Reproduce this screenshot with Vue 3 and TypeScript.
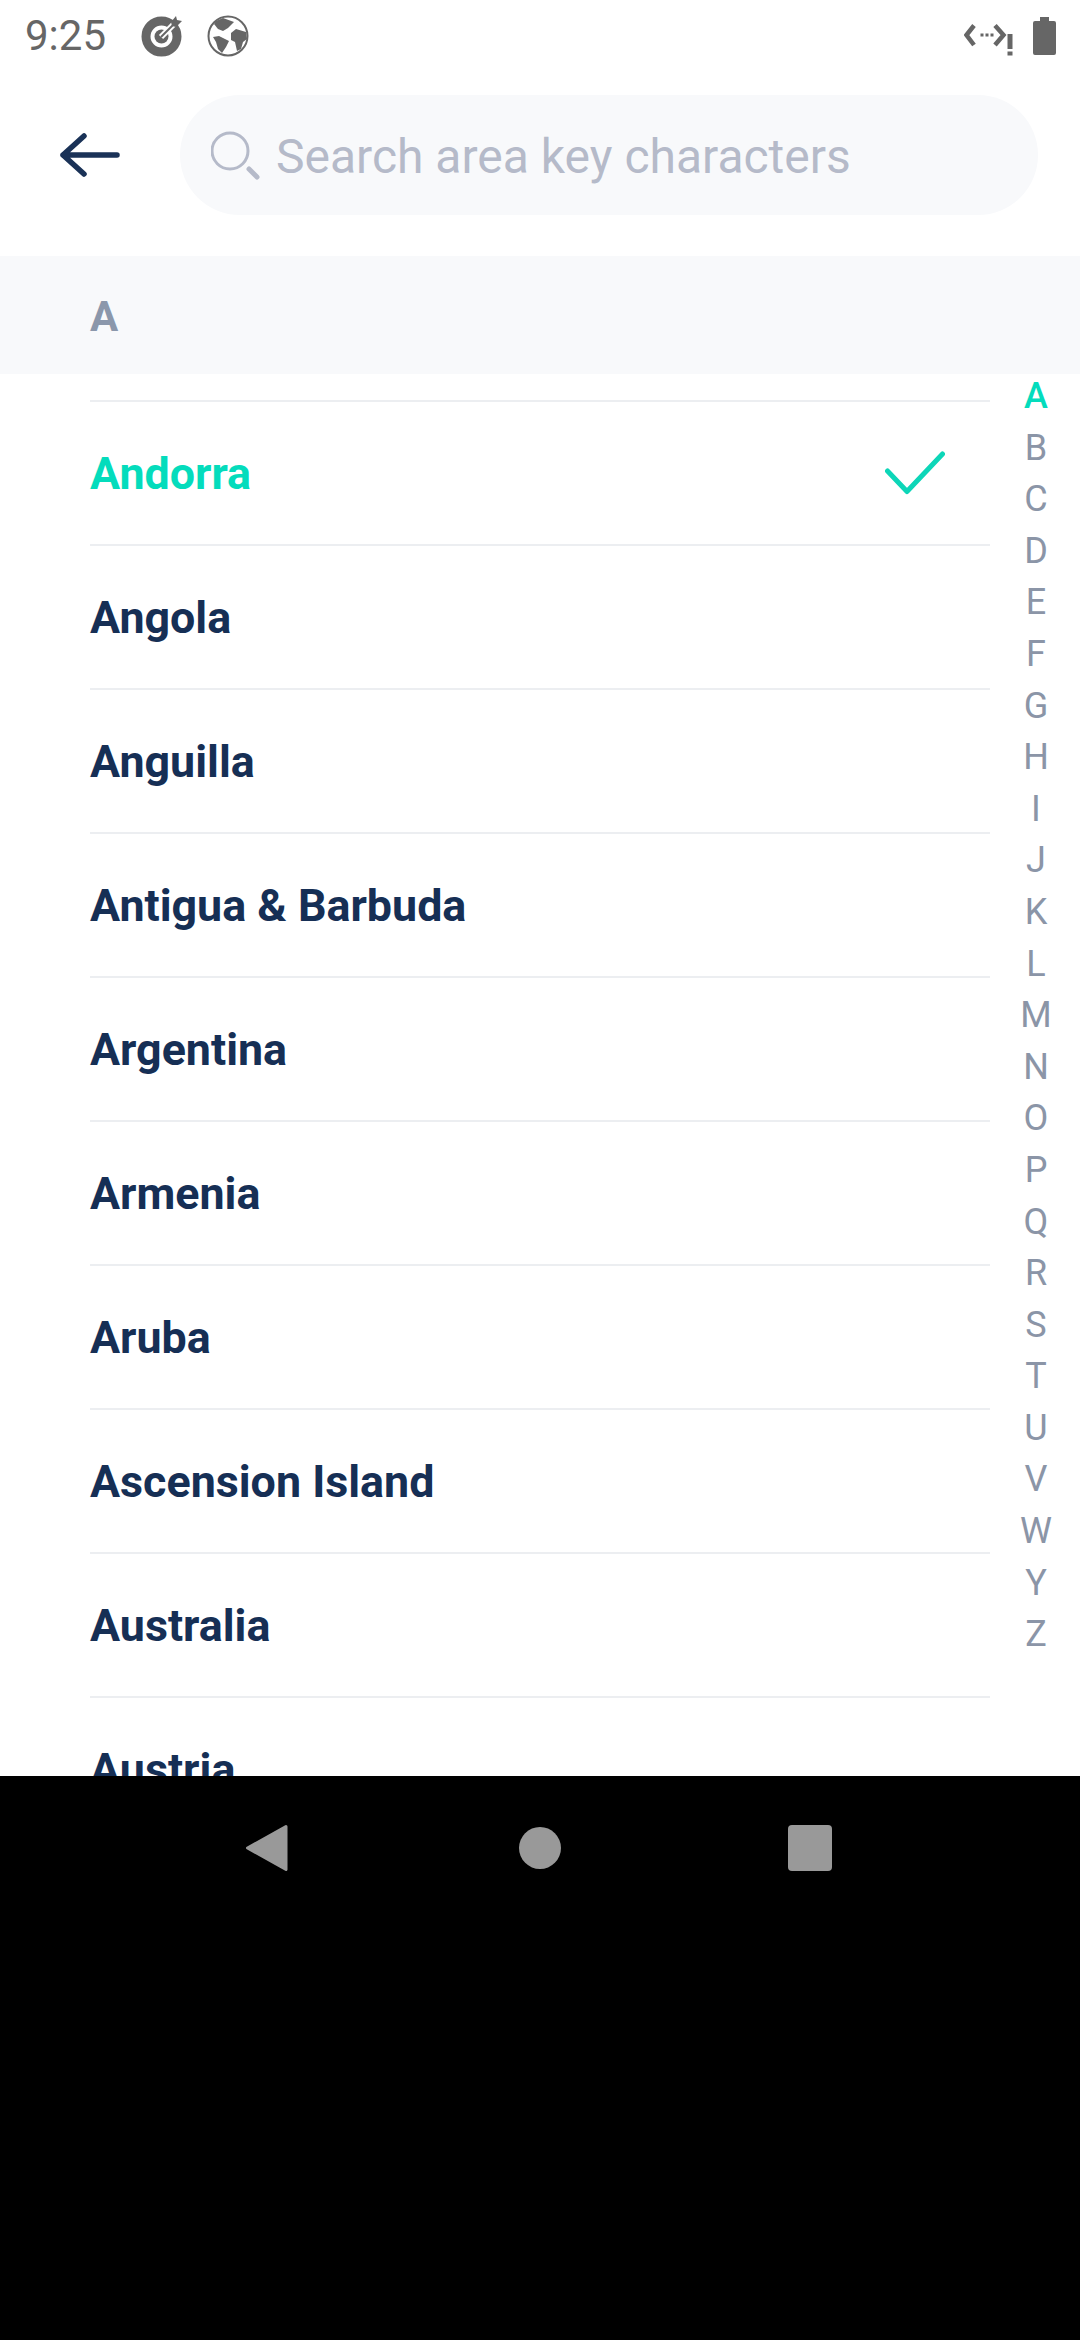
<script setup lang="ts">
const countries = [
  "Andorra",
  "Angola",
  "Anguilla",
  "Antigua & Barbuda",
  "Argentina",
  "Armenia",
  "Aruba",
  "Ascension Island",
  "Australia",
  "Austria",
]
const letters = "ABCDEFGHIJKLMNOPQRSTUVWYZ".split("")
const selected = "Andorra"
const activeLetter = "A"
</script>

<template>
  <div class="screen">
    <div class="app">
      <div class="status-bar">
        <span class="time">9:25</span>
        <svg class="status-icon target" viewBox="0 0 42 42">
          <circle cx="20.500" cy="21.500" r="15.500" fill="none" stroke="#666" stroke-width="9" />
          <circle cx="20.500" cy="21.500" r="7" fill="#666" />
          <path d="M20 22 38 4" stroke="#fff" stroke-width="6" />
          <path d="M20 22 34 8" stroke="#666" stroke-width="2" />
          <path d="M30 7 35 1 36 5 41 6 35 12 31 11Z" fill="#666" />
        </svg>
        <svg class="status-icon globe" viewBox="0 0 42 42">
          <circle cx="21" cy="21" r="19.500" fill="#fff" stroke="#666" stroke-width="2" />
          <path d="M9 6 16 3 27 7 24 10 21 13 16 16 11 14 7 9Z" fill="#666" />
          <path d="M6 22 12 21 22 26 19 32 15 38 11 34 9 27Z" fill="#666" />
          <path d="M24 18 29 14 39 17 40 24 36 27 34 34 30 36 28 27 24 25Z" fill="#666" />
        </svg>
        <svg class="status-icon network" viewBox="0 0 50 32">
          <path d="M10 1.500 2.500 11 10 21M31 1.500 39.500 11 31 21" fill="none" stroke="#666" stroke-width="4.500" />
          <path d="M16.500 9.500h3v3h-3zM21.500 9.500h3v3h-3zM26.500 9.500h3v3h-3z" fill="#666" />
          <path d="M43.500 10h5v15h-5zM43.500 27.500h5v4h-5z" fill="#666" />
        </svg>
        <svg class="status-icon battery" viewBox="0 0 23 38">
          <path d="M7 0h9v4h5a2 2 0 0 1 2 2v30a2 2 0 0 1-2 2H2a2 2 0 0 1-2-2V6a2 2 0 0 1 2-2h5z" fill="#666" />
        </svg>
      </div>

      <div class="search-row">
        <svg class="back" viewBox="0 0 60 44">
          <path d="M3 22H57M24 3 3 22 24 41" fill="none" stroke="#1a3257" stroke-width="5.500" stroke-linecap="round" stroke-linejoin="round" />
        </svg>
        <div class="search">
          <svg class="search-icon" viewBox="0 0 50 50">
            <circle cx="19" cy="21" r="18" fill="none" stroke="#b5bac9" stroke-width="3" />
            <path d="M38 39 46 47" stroke="#b5bac9" stroke-width="5" stroke-linecap="round" />
          </svg>
          <span class="placeholder">Search area key characters</span>
        </div>
      </div>

      <div class="section-head">A</div>

      <div class="body">
        <ul class="list">
          <li
            v-for="name in countries"
            :key="name"
            class="row"
            :class="{ selected: name === selected }"
          >
            <span>{{ name }}</span>
            <svg v-if="name === selected" class="check" viewBox="0 0 60 44">
              <path d="M2.500 20 22 40.500 57.500 3" fill="none" stroke="#0dd6b8" stroke-width="5" stroke-linecap="round" stroke-linejoin="round" />
            </svg>
          </li>
        </ul>
        <div class="index">
          <span
            v-for="letter in letters"
            :key="letter"
            class="letter"
            :class="{ active: letter === activeLetter }"
          >{{ letter }}</span>
        </div>
      </div>
    </div>

    <div class="nav-bar">
      <svg class="nav-icon" viewBox="0 0 44 48">
        <path d="M41 2.500 2.500 24 41 45.500Z" fill="#999" stroke="#999" stroke-width="3" stroke-linejoin="round" />
      </svg>
      <span class="nav-circle" />
      <span class="nav-square" />
    </div>
  </div>
</template>

<style>
html,
body {
  margin: 0;
  background: #000;
}
</style>

<style scoped>
.screen {
  width: 1080px;
  height: 2340px;
  display: flex;
  flex-direction: column;
  background: #000;
  font-family: Roboto, "Liberation Sans", sans-serif;
}
.app {
  height: 1776px;
  flex: none;
  display: flex;
  flex-direction: column;
  background: #fff;
  overflow: hidden;
}
.status-bar {
  height: 72px;
  flex: none;
  display: flex;
  align-items: center;
  padding: 0 24px 0 25px;
  box-sizing: border-box;
  color: #666;
}
.time {
  font-size: 42px;
  line-height: 72px;
}
.status-icon {
  display: block;
  flex: none;
}
.target {
  width: 42px;
  height: 42px;
  margin-left: 35px;
}
.globe {
  width: 42px;
  height: 42px;
  margin-left: 24px;
}
.network {
  width: 50px;
  height: 32px;
  margin-left: auto;
  margin-top: 8px;
}
.battery {
  width: 23px;
  height: 38px;
  margin-left: 19px;
}
.search-row {
  height: 184px;
  flex: none;
  display: flex;
  align-items: center;
  padding: 0 42px 18px 60px;
  box-sizing: border-box;
}
.back {
  width: 60px;
  height: 44px;
  flex: none;
}
.search {
  flex: 1;
  height: 120px;
  margin-left: 60px;
  display: flex;
  align-items: center;
  padding-left: 31px;
  border-radius: 60px;
  background: #f8f9fb;
}
.search-icon {
  width: 50px;
  height: 50px;
  flex: none;
}
.placeholder {
  margin-left: 15px;
  padding-top: 2px;
  color: #b5bac9;
  font-size: 48px;
}
.section-head {
  height: 118px;
  flex: none;
  padding-left: 90px;
  background: #f8f9fb;
  color: #8b97ab;
  font-size: 42px;
  font-weight: 700;
  line-height: 122px;
}
.body {
  flex: 1;
  min-height: 0;
  display: flex;
  overflow: hidden;
}
.list {
  width: 900px;
  flex: none;
  margin: 26px 0 0 90px;
  padding: 0;
  list-style: none;
  border-top: 2px solid #eceef1;
}
.row {
  height: 142px;
  display: flex;
  align-items: center;
  justify-content: space-between;
  border-bottom: 2px solid #eceef1;
  color: #162f55;
  font-size: 44.800px;
  font-weight: 700;
}
.row:last-child {
  border-bottom: none;
}
.row.selected {
  color: #04dcbc;
}
.check {
  width: 60px;
  height: 44px;
  margin-right: 45px;
}
.index {
  flex: 1;
  display: flex;
  flex-direction: column;
  align-items: center;
  margin-top: -3px;
  padding-left: 2px;
}
.letter {
  height: 51.600px;
  color: #8b95a7;
  font-size: 36px;
  line-height: 51.600px;
}
.letter.active {
  color: #04dcbc;
  font-weight: 500;
}
.nav-bar {
  flex: none;
  height: 144px;
  display: flex;
  align-items: center;
}
.nav-icon {
  display: block;
  flex: none;
  width: 44px;
  height: 48px;
  margin-left: 245px;
}
.nav-circle {
  width: 42px;
  height: 42px;
  margin-left: 230px;
  border-radius: 50%;
  background: #999;
}
.nav-square {
  width: 44px;
  height: 46px;
  margin-left: 227px;
  border-radius: 4px;
  background: #999;
}
</style>
